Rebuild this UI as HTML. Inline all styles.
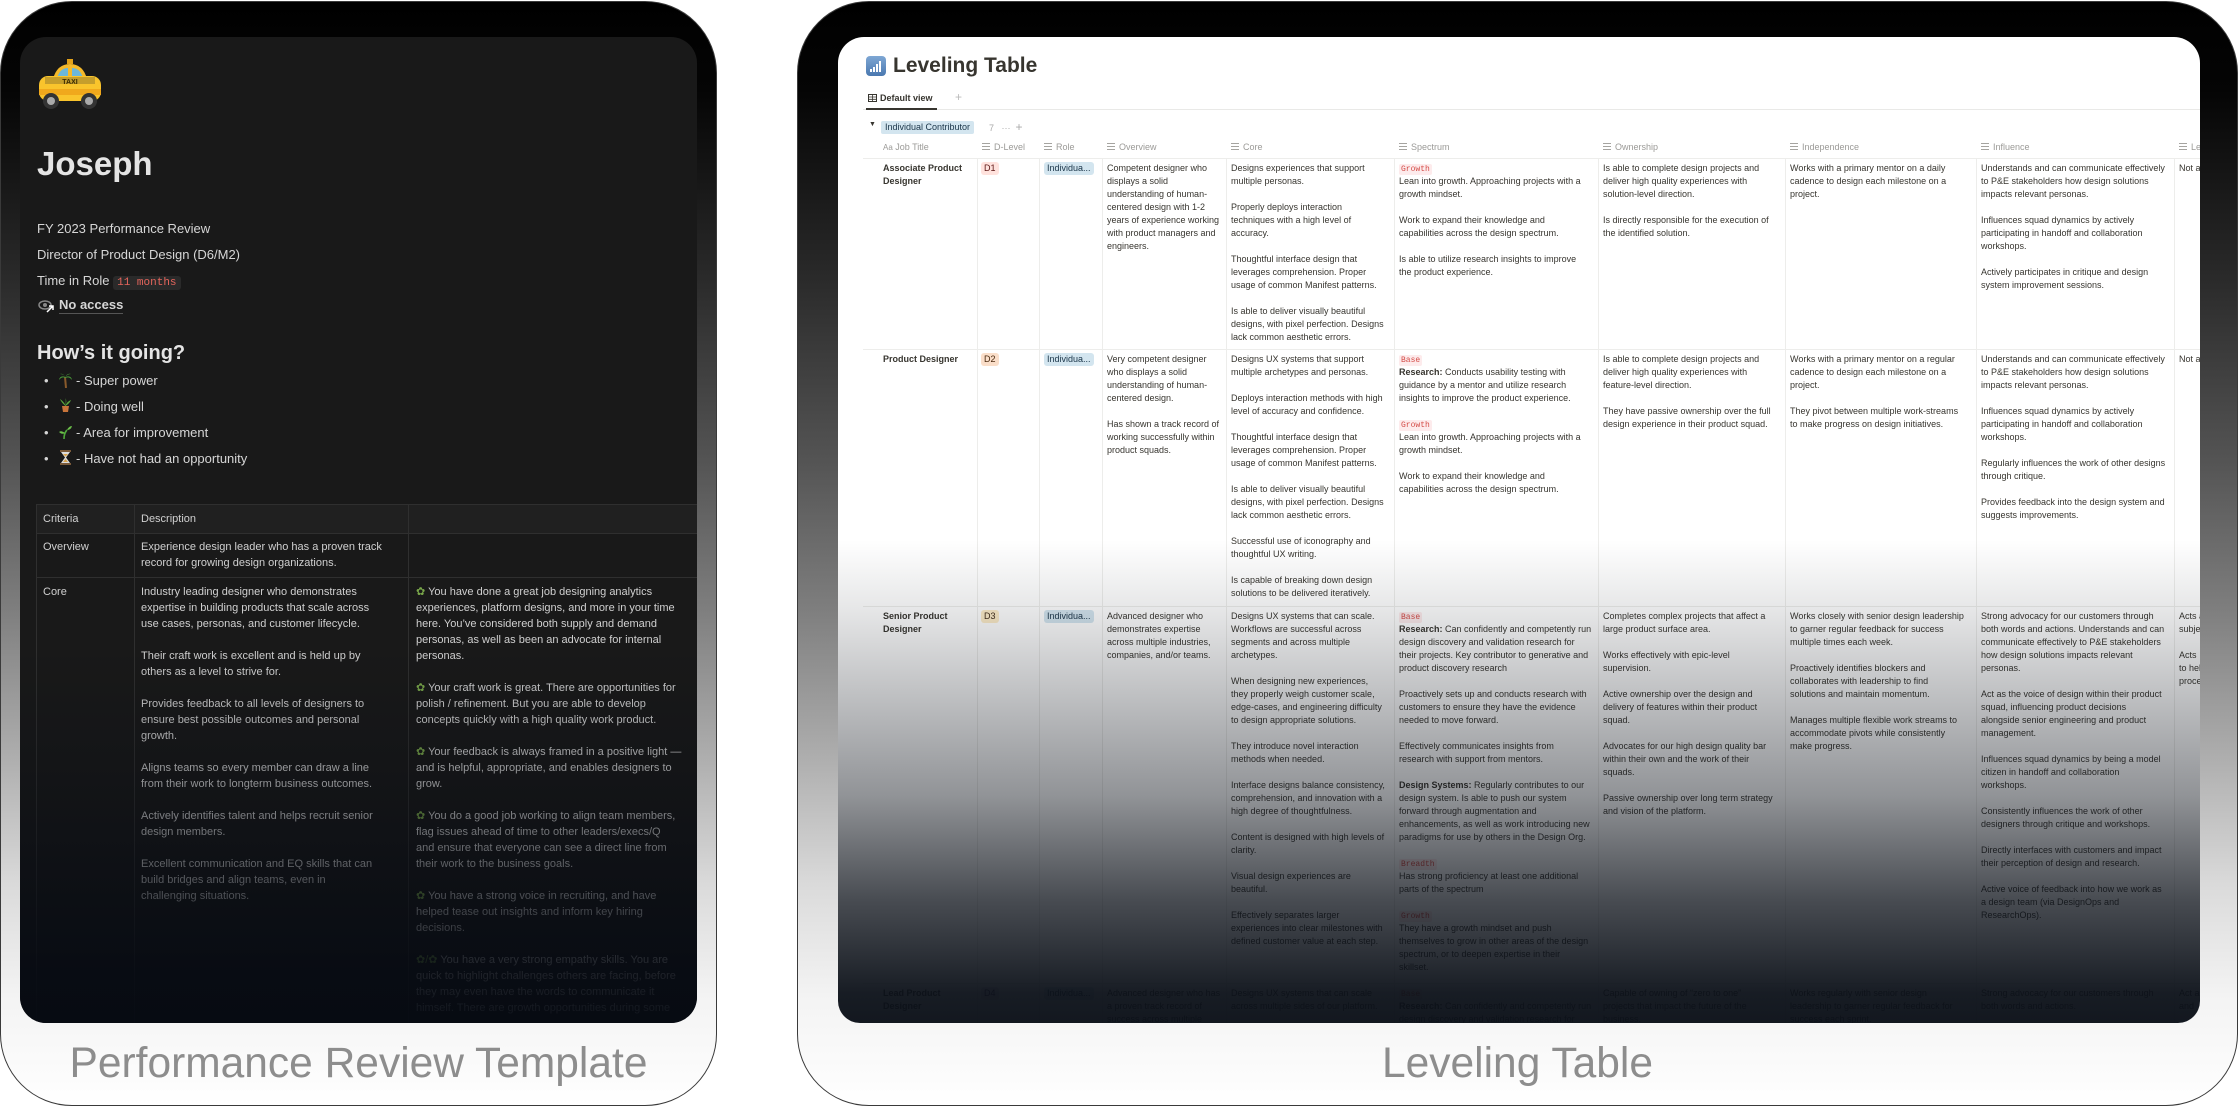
<!DOCTYPE html>
<html><head><meta charset="utf-8">
<style>
*{margin:0;padding:0;box-sizing:border-box}
html,body{width:2240px;height:1108px;background:#fff;overflow:hidden;font-family:"Liberation Sans",sans-serif}
.frame{position:absolute;top:1px;height:1105px;border:1.5px solid #3a3a3a;border-radius:72px;
background:linear-gradient(to bottom,#000 0%,#050505 8%,#2a2a2a 25%,#555 42%,#7e7e7e 55%,#acacac 68%,#dadada 80%,#f3f3f3 90%,#fff 100%)}
.label{position:absolute;top:1039px;font-size:42.5px;color:#8d8d8d;text-align:center;line-height:50px}
#lp{position:absolute;left:20px;top:37px;width:677px;height:986px;background:#191919;border-radius:26px;overflow:hidden;color:#d6d6d6}
#lp .a{position:absolute;white-space:nowrap}
#lp .t{font-size:13px;line-height:18px}
.lt{position:absolute;font-size:11px;line-height:16px;color:#d0d0d0;white-space:nowrap}
.lt p{margin-bottom:16px}
#rp{position:absolute;left:838px;top:37px;width:1362px;height:986px;background:#fff;border-radius:26px 26px 22px 22px;overflow:hidden;color:#37352f}
.c{position:absolute;font-size:9px;line-height:13px;white-space:nowrap;overflow:hidden;color:#37352f}
.c p{margin-bottom:13px}
.tg{font-family:"Liberation Mono",monospace;font-size:8px;color:#d44c47;background:#fdebec;padding:0 2px;border-radius:2px;line-height:11px;display:inline-block}
.ch{display:inline-block;font-size:9px;line-height:13px;padding:0 3px;border-radius:3px}
.vl{position:absolute;top:121px;width:1px;height:900px;background:#ededeb}
.hl{position:absolute;left:25px;width:1340px;height:1px;background:#ededeb}
.hd{position:absolute;top:104px;font-size:9px;line-height:13px;color:#9b9a97;white-space:nowrap}
.ic{display:inline-block;width:8px;height:7px;margin-right:4px;vertical-align:-0px;background:linear-gradient(#a5a4a0 0 1px,transparent 1px 3px,#a5a4a0 3px 4px,transparent 4px 6px,#a5a4a0 6px 7px)}
b{font-weight:bold}
</style></head><body>

<div class="frame" style="left:0;width:717px"></div>
<div class="frame" style="left:797px;width:1441px"></div>
<div class="label" style="left:0;width:717px">Performance Review Template</div>
<div class="label" style="left:797px;width:1441px">Leveling Table</div>

<!-- LEFT PANEL -->
<div id="lp">
 <svg class="a" style="left:17px;top:22px" width="66" height="52" viewBox="0 0 66 52">
  <rect x="30" y="0" width="6" height="5" fill="#e3a21a"/>
  <path d="M16 20 Q20 5 33 5 Q46 5 50 20 Z" fill="#f5b92a"/>
  <path d="M20 19 Q23 9 31 9 L31 19 Z M35 9 Q43 9 46 19 L35 19 Z" fill="#6cb7d9"/>
  <rect x="2" y="17" width="62" height="25" rx="9" fill="#f9c42c"/>
  <rect x="8" y="18" width="50" height="7" fill="#2b2b2b" opacity=".25"/>
  <text x="33" y="25" font-size="7" font-weight="bold" text-anchor="middle" fill="#3a2a00" font-family="Liberation Sans">TAXI</text>
  <rect x="2" y="30" width="62" height="6" fill="#f0a81c"/>
  <circle cx="14" cy="42" r="8" fill="#333"/><circle cx="14" cy="42" r="4" fill="#aaa"/>
  <circle cx="52" cy="42" r="8" fill="#333"/><circle cx="52" cy="42" r="4" fill="#aaa"/>
 </svg>
 <div class="a" style="left:17px;top:107px;font-size:33px;line-height:40px;font-weight:bold;color:#e4e4e4">Joseph</div>
 <div class="a t" style="left:17px;top:183px">FY 2023 Performance Review</div>
 <div class="a t" style="left:17px;top:209px">Director of Product Design (D6/M2)</div>
 <div class="a t" style="left:17px;top:235px">Time in Role <span style="font-family:'Liberation Mono',monospace;font-size:11px;color:#e5655c;background:#2a2a2a;padding:1px 4px;border-radius:3px">11 months</span></div>
 <svg class="a" style="left:18px;top:262px" width="16" height="14" viewBox="0 0 16 14"><ellipse cx="7" cy="6" rx="6" ry="4" fill="none" stroke="#888" stroke-width="1.5"/><circle cx="7" cy="6" r="2" fill="#888"/><path d="M9 13 L15 7 M11 7 H15 V11" stroke="#fff" stroke-width="1.5" fill="none"/></svg>
 <div class="a t" style="left:39px;top:260px;font-weight:bold;border-bottom:1px solid #555;line-height:16px">No access</div>
 <div class="a" style="left:17px;top:303px;font-size:20px;line-height:26px;font-weight:bold;color:#e4e4e4">How’s it going?</div>

 <div class="a t" style="left:24px;top:335px">•</div>
 <svg class="a" style="left:39px;top:336px" width="13" height="15" viewBox="0 0 13 15"><path d="M6 4 L7 15" stroke="#8a5a2b" stroke-width="2"/><path d="M6.5 4 Q1 2 0 7 Q3 3 6.5 5 Q10 3 13 7 Q12 2 6.5 4Z M6.5 4 Q4 0 1 1 Q5 1 6.5 4 Q8 0 12 1 Q8 1 6.5 4" fill="#4a9b3a"/></svg>
 <div class="a t" style="left:56px;top:335px">- Super power</div>
 <div class="a t" style="left:24px;top:361px">•</div>
 <svg class="a" style="left:39px;top:361px" width="13" height="15" viewBox="0 0 13 15"><path d="M3 8 H10 L9 14 H4Z" fill="#c8743a"/><path d="M6.5 8 Q2 4 1 1 Q4 3 6.5 7 Q7 2 6.5 0 Q8 3 6.5 7 Q9 3 12 2 Q11 5 6.5 8" fill="#5aa83e"/></svg>
 <div class="a t" style="left:56px;top:361px">- Doing well</div>
 <div class="a t" style="left:24px;top:387px">•</div>
 <svg class="a" style="left:39px;top:388px" width="13" height="14" viewBox="0 0 13 14"><path d="M5 14 Q5 8 8 5" stroke="#4fa83a" stroke-width="1.6" fill="none"/><path d="M8 5 Q10 1 13 1 Q12 5 8 5Z M6 8 Q2 5 0 7 Q3 10 6 8Z" fill="#6cc04a"/></svg>
 <div class="a t" style="left:56px;top:387px">- Area for improvement</div>
 <div class="a t" style="left:24px;top:413px">•</div>
 <svg class="a" style="left:40px;top:413px" width="11" height="15" viewBox="0 0 11 15"><rect x="0" y="0" width="11" height="2" fill="#7a5a3a"/><rect x="0" y="13" width="11" height="2" fill="#7a5a3a"/><path d="M1 2 H10 L6 7.5 L10 13 H1 L5 7.5Z" fill="#ddd"/><path d="M3 12 H8 L5.5 9Z M3 4 H8 L5.5 6.5Z" fill="#d9a24a"/></svg>
 <div class="a t" style="left:56px;top:413px">- Have not had an opportunity</div>

 <!-- table -->
 <div class="a" style="left:16px;top:467px;width:700px;height:29px;background:#202020"></div>
 <div class="a" style="left:16px;top:467px;width:700px;height:1px;background:#2f2f2f"></div>
 <div class="a" style="left:16px;top:496px;width:700px;height:1px;background:#2f2f2f"></div>
 <div class="a" style="left:16px;top:540px;width:700px;height:1px;background:#2f2f2f"></div>
 <div class="a" style="left:16px;top:467px;width:1px;height:600px;background:#2f2f2f"></div>
 <div class="a" style="left:114px;top:467px;width:1px;height:600px;background:#2f2f2f"></div>
 <div class="a" style="left:388px;top:467px;width:1px;height:600px;background:#2f2f2f"></div>
 <div class="lt" style="left:23px;top:474px">Criteria</div>
 <div class="lt" style="left:121px;top:474px">Description</div>
 <div class="lt" style="left:23px;top:502px">Overview</div>
 <div class="lt" style="left:121px;top:502px">Experience design leader who has a proven track<br>record for growing design organizations.</div>
 <div class="lt" style="left:23px;top:547px">Core</div>
 <div class="lt" style="left:121px;top:547px">
  <p>Industry leading designer who demonstrates<br>expertise in building products that scale across<br>use cases, personas, and customer lifecycle.</p>
  <p>Their craft work is excellent and is held up by<br>others as a level to strive for.</p>
  <p>Provides feedback to all levels of designers to<br>ensure best possible outcomes and personal<br>growth.</p>
  <p>Aligns teams so every member can draw a line<br>from their work to longterm business outcomes.</p>
  <p>Actively identifies talent and helps recruit senior<br>design members.</p>
  <p>Excellent communication and EQ skills that can<br>build bridges and align teams, even in<br>challenging situations.</p>
 </div>
 <div class="lt" style="left:396px;top:547px">
  <p><span style="color:#7aa84a">✿</span> You have done a great job designing analytics<br>experiences, platform designs, and more in your time<br>here. You’ve considered both supply and demand<br>personas, as well as been an advocate for internal<br>personas.</p>
  <p><span style="color:#7aa84a">✿</span> Your craft work is great. There are opportunities for<br>polish / refinement. But you are able to develop<br>concepts quickly with a high quality work product.</p>
  <p><span style="color:#7aa84a">✿</span> Your feedback is always framed in a positive light —<br>and is helpful, appropriate, and enables designers to<br>grow.</p>
  <p><span style="color:#7aa84a">✿</span> You do a good job working to align team members,<br>flag issues ahead of time to other leaders/execs/Q<br>and ensure that everyone can see a direct line from<br>their work to the business goals.</p>
  <p><span style="color:#7aa84a">✿</span> You have a strong voice in recruiting, and have<br>helped tease out insights and inform key hiring<br>decisions.</p>
  <p><span style="color:#7aa84a">✿/✿</span> You have a very strong empathy skills. You are<br>quick to highlight challenges others are facing, before<br>they may even have the words to communicate it<br>himself. There are growth opportunities during some</p>
 </div>
 <div class="a" style="left:0;top:0;width:677px;height:986px;background:linear-gradient(to bottom,rgba(6,10,18,0) 0%,rgba(6,10,18,0) 62%,rgba(6,10,18,.3) 75%,rgba(6,10,18,.6) 85%,rgba(6,10,18,.88) 95%,rgba(6,10,18,.95) 100%)"></div>
</div>

<!-- RIGHT PANEL -->
<div id="rp">
 <svg style="position:absolute;left:28px;top:19px" width="20" height="20" viewBox="0 0 20 20"><defs><linearGradient id="g" x1="0" y1="0" x2="0" y2="1"><stop offset="0" stop-color="#7ea7d4"/><stop offset="1" stop-color="#4a78b0"/></linearGradient></defs><rect width="20" height="20" rx="4" fill="url(#g)"/><rect x="4" y="13" width="2" height="3" fill="#fff"/><rect x="7" y="11" width="2" height="5" fill="#fff"/><rect x="10" y="8" width="2" height="8" fill="#fff"/><rect x="13" y="5" width="2" height="11" fill="#fff"/></svg>
 <div style="position:absolute;left:55px;top:16px;font-size:21px;line-height:26px;font-weight:bold;color:#37352f">Leveling Table</div>
 <svg style="position:absolute;left:30px;top:57px" width="9" height="8" viewBox="0 0 9 8"><rect x=".5" y=".5" width="8" height="7" fill="none" stroke="#37352f"/><path d="M.5 3H8.5M.5 5.3H8.5M4.5 .5V7.5" stroke="#37352f" stroke-width=".8"/></svg>
 <div style="position:absolute;left:42px;top:55px;font-size:9px;line-height:13px;font-weight:bold;color:#37352f">Default view</div>
 <div style="position:absolute;left:117px;top:53px;font-size:12px;color:#bbb">+</div>
 <div style="position:absolute;left:25px;top:72px;width:1340px;height:1px;background:#e9e9e7"></div>
 <div style="position:absolute;left:28px;top:71px;width:71px;height:2px;background:#37352f"></div>
 <div style="position:absolute;left:31px;top:84px;font-size:7px;color:#37352f">▼</div>
 <div style="position:absolute;left:43px;top:84px;background:#d3e5ef;color:#183347;font-size:9px;line-height:13px;padding:0 4px;border-radius:2px">Individual Contributor</div>
 <div style="position:absolute;left:151px;top:84px;font-size:9px;line-height:13px;color:#aaa">7 &nbsp; ··· &nbsp;<span style="font-size:12px">+</span></div>

 <div class="hd" style="left:45px"><span style="font-size:8px">Aa</span> Job Title</div>
 <div class="hd" style="left:144px"><span class="ic"></span>D-Level</div>
 <div class="hd" style="left:206px"><span class="ic"></span>Role</div>
 <div class="hd" style="left:269px"><span class="ic"></span>Overview</div>
 <div class="hd" style="left:393px"><span class="ic"></span>Core</div>
 <div class="hd" style="left:561px"><span class="ic"></span>Spectrum</div>
 <div class="hd" style="left:765px"><span class="ic"></span>Ownership</div>
 <div class="hd" style="left:952px"><span class="ic"></span>Independence</div>
 <div class="hd" style="left:1143px"><span class="ic"></span>Influence</div>
 <div class="hd" style="left:1341px"><span class="ic"></span>Le</div>

 <div class="hl" style="top:121px"></div><div class="hl" style="top:312px"></div><div class="hl" style="top:569px"></div><div class="hl" style="top:946px"></div>
 <div class="vl" style="left:139px"></div><div class="vl" style="left:201px"></div><div class="vl" style="left:264px"></div><div class="vl" style="left:388px"></div><div class="vl" style="left:556px"></div><div class="vl" style="left:760px"></div><div class="vl" style="left:947px"></div><div class="vl" style="left:1138px"></div><div class="vl" style="left:1336px"></div>

 <!-- row 1 -->
 <div class="c" style="left:45px;top:125px;font-weight:bold">Associate Product<br>Designer</div>
 <div class="c" style="left:143px;top:125px"><span class="ch" style="background:#ffe2dd;color:#5d1715">D1</span></div>
 <div class="c" style="left:206px;top:125px"><span class="ch" style="background:#d3e5ef;color:#183347">Individua...</span></div>
 <div class="c" style="left:269px;top:125px;width:118px">Competent designer who<br>displays a solid<br>understanding of human-<br>centered design with 1-2<br>years of experience working<br>with product managers and<br>engineers.</div>
 <div class="c" style="left:393px;top:125px;width:162px"><p>Designs experiences that support<br>multiple personas.</p><p>Properly deploys interaction<br>techniques with a high level of<br>accuracy.</p><p>Thoughtful interface design that<br>leverages comprehension. Proper<br>usage of common Manifest patterns.</p><p>Is able to deliver visually beautiful<br>designs, with pixel perfection. Designs<br>lack common aesthetic errors.</p></div>
 <div class="c" style="left:561px;top:125px;width:198px"><span class="tg">Growth</span><br><p>Lean into growth. Approaching projects with a<br>growth mindset.</p><p>Work to expand their knowledge and<br>capabilities across the design spectrum.</p><p>Is able to utilize research insights to improve<br>the product experience.</p></div>
 <div class="c" style="left:765px;top:125px;width:181px"><p>Is able to complete design projects and<br>deliver high quality experiences with<br>solution-level direction.</p><p>Is directly responsible for the execution of<br>the identified solution.</p></div>
 <div class="c" style="left:952px;top:125px;width:185px">Works with a primary mentor on a daily<br>cadence to design each milestone on a<br>project.</div>
 <div class="c" style="left:1143px;top:125px;width:192px"><p>Understands and can communicate effectively<br>to P&amp;E stakeholders how design solutions<br>impacts relevant personas.</p><p>Influences squad dynamics by actively<br>participating in handoff and collaboration<br>workshops.</p><p>Actively participates in critique and design<br>system improvement sessions.</p></div>
 <div class="c" style="left:1341px;top:125px;width:22px">Not a</div>

 <!-- row 2 -->
 <div class="c" style="left:45px;top:316px;font-weight:bold">Product Designer</div>
 <div class="c" style="left:143px;top:316px"><span class="ch" style="background:#fadec9;color:#49290e">D2</span></div>
 <div class="c" style="left:206px;top:316px"><span class="ch" style="background:#d3e5ef;color:#183347">Individua...</span></div>
 <div class="c" style="left:269px;top:316px;width:118px"><p>Very competent designer<br>who displays a solid<br>understanding of human-<br>centered design.</p><p>Has shown a track record of<br>working successfully within<br>product squads.</p></div>
 <div class="c" style="left:393px;top:316px;width:162px"><p>Designs UX systems that support<br>multiple archetypes and personas.</p><p>Deploys interaction methods with high<br>level of accuracy and confidence.</p><p>Thoughtful interface design that<br>leverages comprehension. Proper<br>usage of common Manifest patterns.</p><p>Is able to deliver visually beautiful<br>designs, with pixel perfection. Designs<br>lack common aesthetic errors.</p><p>Successful use of iconography and<br>thoughtful UX writing.</p><p>Is capable of breaking down design<br>solutions to be delivered iteratively.</p></div>
 <div class="c" style="left:561px;top:316px;width:198px"><span class="tg">Base</span><br><p><b>Research:</b> Conducts usability testing with<br>guidance by a mentor and utilize research<br>insights to improve the product experience.</p><span class="tg">Growth</span><br><p>Lean into growth. Approaching projects with a<br>growth mindset.</p><p>Work to expand their knowledge and<br>capabilities across the design spectrum.</p></div>
 <div class="c" style="left:765px;top:316px;width:181px"><p>Is able to complete design projects and<br>deliver high quality experiences with<br>feature-level direction.</p><p>They have passive ownership over the full<br>design experience in their product squad.</p></div>
 <div class="c" style="left:952px;top:316px;width:185px"><p>Works with a primary mentor on a regular<br>cadence to design each milestone on a<br>project.</p><p>They pivot between multiple work-streams<br>to make progress on design initiatives.</p></div>
 <div class="c" style="left:1143px;top:316px;width:192px"><p>Understands and can communicate effectively<br>to P&amp;E stakeholders how design solutions<br>impacts relevant personas.</p><p>Influences squad dynamics by actively<br>participating in handoff and collaboration<br>workshops.</p><p>Regularly influences the work of other designs<br>through critique.</p><p>Provides feedback into the design system and<br>suggests improvements.</p></div>
 <div class="c" style="left:1341px;top:316px;width:22px">Not a</div>

 <!-- row 3 -->
 <div class="c" style="left:45px;top:573px;font-weight:bold">Senior Product<br>Designer</div>
 <div class="c" style="left:143px;top:573px"><span class="ch" style="background:#fdecc8;color:#402c1b">D3</span></div>
 <div class="c" style="left:206px;top:573px"><span class="ch" style="background:#d3e5ef;color:#183347">Individua...</span></div>
 <div class="c" style="left:269px;top:573px;width:118px">Advanced designer who<br>demonstrates expertise<br>across multiple industries,<br>companies, and/or teams.</div>
 <div class="c" style="left:393px;top:573px;width:162px"><p>Designs UX systems that can scale.<br>Workflows are successful across<br>segments and across multiple<br>archetypes.</p><p>When designing new experiences,<br>they properly weigh customer scale,<br>edge-cases, and engineering difficulty<br>to design appropriate solutions.</p><p>They introduce novel interaction<br>methods when needed.</p><p>Interface designs balance consistency,<br>comprehension, and innovation with a<br>high degree of thoughtfulness.</p><p>Content is designed with high levels of<br>clarity.</p><p>Visual design experiences are<br>beautiful.</p><p>Effectively separates larger<br>experiences into clear milestones with<br>defined customer value at each step.</p></div>
 <div class="c" style="left:561px;top:573px;width:198px"><span class="tg">Base</span><br><p><b>Research:</b> Can confidently and competently run<br>design discovery and validation research for<br>their projects. Key contributor to generative and<br>product discovery research</p><p>Proactively sets up and conducts research with<br>customers to ensure they have the evidence<br>needed to move forward.</p><p>Effectively communicates insights from<br>research with support from mentors.</p><p><b>Design Systems:</b> Regularly contributes to our<br>design system. Is able to push our system<br>forward through augmentation and<br>enhancements, as well as work introducing new<br>paradigms for use by others in the Design Org.</p><span class="tg">Breadth</span><br><p>Has strong proficiency at least one additional<br>parts of the spectrum</p><span class="tg">Growth</span><br><p>They have a growth mindset and push<br>themselves to grow in other areas of the design<br>spectrum, or to deepen expertise in their<br>skillset.</p></div>
 <div class="c" style="left:765px;top:573px;width:181px"><p>Completes complex projects that affect a<br>large product surface area.</p><p>Works effectively with epic-level<br>supervision.</p><p>Active ownership over the design and<br>delivery of features within their product<br>squad.</p><p>Advocates for our high design quality bar<br>within their own and the work of their<br>squads.</p><p>Passive ownership over long term strategy<br>and vision of the platform.</p></div>
 <div class="c" style="left:952px;top:573px;width:185px"><p>Works closely with senior design leadership<br>to garner regular feedback for success<br>multiple times each week.</p><p>Proactively identifies blockers and<br>collaborates with leadership to find<br>solutions and maintain momentum.</p><p>Manages multiple flexible work streams to<br>accommodate pivots while consistently<br>make progress.</p></div>
 <div class="c" style="left:1143px;top:573px;width:192px"><p>Strong advocacy for our customers through<br>both words and actions. Understands and can<br>communicate effectively to P&amp;E stakeholders<br>how design solutions impacts relevant<br>personas.</p><p>Act as the voice of design within their product<br>squad, influencing product decisions<br>alongside senior engineering and product<br>management.</p><p>Influences squad dynamics by being a model<br>citizen in handoff and collaboration<br>workshops.</p><p>Consistently influences the work of other<br>designers through critique and workshops.</p><p>Directly interfaces with customers and impact<br>their perception of design and research.</p><p>Active voice of feedback into how we work as<br>a design team (via DesignOps and<br>ResearchOps).</p></div>
 <div class="c" style="left:1341px;top:573px;width:22px"><p>Acts a<br>subje</p><p>Acts<br>to hel<br>proce</p></div>

 <!-- row 4 -->
 <div class="c" style="left:45px;top:950px;font-weight:bold">Lead Product<br>Designer</div>
 <div class="c" style="left:143px;top:950px"><span class="ch" style="background:#e8deee;color:#412454">D4</span></div>
 <div class="c" style="left:206px;top:950px"><span class="ch" style="background:#d3e5ef;color:#183347">Individua...</span></div>
 <div class="c" style="left:269px;top:950px;width:118px">Advanced designer who has<br>a proven track record of<br>success across multiple</div>
 <div class="c" style="left:393px;top:950px;width:162px">Designs UX systems that can scale<br>across multiple sides of our platform.</div>
 <div class="c" style="left:561px;top:950px;width:198px"><span class="tg">Base</span><br><b>Research:</b> Can confidently and competently run<br>design discovery and validation research for</div>
 <div class="c" style="left:765px;top:950px;width:181px">Capable of owning of “zero to one”<br>projects that impact the future of the<br>business.</div>
 <div class="c" style="left:952px;top:950px;width:185px">Works regularly with senior design<br>leadership to garner regular feedback for<br>success each sprint.</div>
 <div class="c" style="left:1143px;top:950px;width:192px">Strong advocacy for our customers through<br>both words and actions.</div>
 <div class="c" style="left:1341px;top:950px;width:22px">Act a<br>and</div>

 <div style="position:absolute;left:0;top:0;width:1362px;height:986px;background:linear-gradient(to bottom,rgba(11,16,24,0) 0%,rgba(11,16,24,0) 51%,rgba(11,16,24,.1) 58%,rgba(11,16,24,.45) 77%,rgba(11,16,24,.75) 87.5%,rgba(11,16,24,.95) 97%,rgba(11,16,24,.97) 100%)"></div>
</div>
</body></html>
